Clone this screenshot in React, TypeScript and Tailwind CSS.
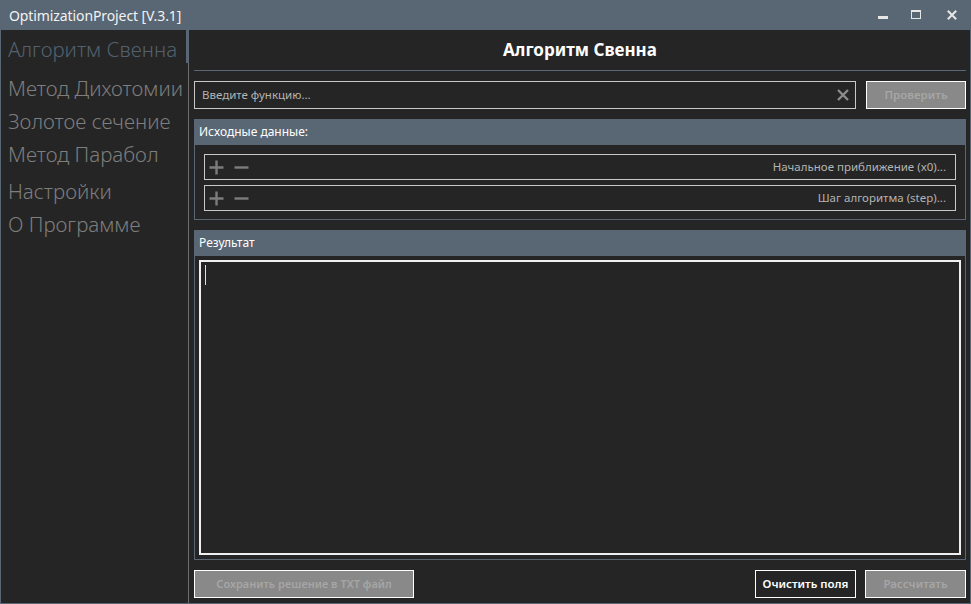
import { useState } from "react";

const font = { fontFamily: '"Noto Sans", "Open Sans", sans-serif' };

const menu = [
  { label: "Алгоритм Свенна", active: true, mt: "mt-[3px]" },
  { label: "Метод Дихотомии", active: false, mt: "mt-[6px]" },
  { label: "Золотое сечение", active: false, mt: "mt-0" },
  { label: "Метод Парабол", active: false, mt: "mt-0" },
  { label: "Настройки", active: false, mt: "mt-[4px]" },
  { label: "О Программе", active: false, mt: "mt-0" },
];

const PlusMinus = () => (
  <div className="flex items-center gap-[10px] pl-[4px]">
    <svg width="15" height="15" viewBox="0 0 15 15">
      <path d="M7.5 0.5v14M0.5 7.5h14" stroke="#7c7c7c" strokeWidth="2.4" />
    </svg>
    <svg width="15" height="15" viewBox="0 0 15 15">
      <path d="M0.5 7.5h14" stroke="#7c7c7c" strokeWidth="2.4" />
    </svg>
  </div>
);

const ParamRow = ({ hint }: { hint: string }) => (
  <div className="flex h-[26px] items-center justify-between border border-[#c8c8c8] pr-[9px]">
    <PlusMinus />
    <span className="text-[11.5px] text-[#b4b4b4]">{hint}</span>
  </div>
);

export default function App() {
  const [func, setFunc] = useState("");

  return (
    <div
      className="flex h-[604px] w-[971px] flex-col bg-[#596673] antialiased"
      style={font}
    >
      {/* title bar */}
      <div className="flex h-[30px] shrink-0 items-center justify-between pl-[9px] pr-[14px]">
        <span className="text-[14px] tracking-[-0.1px] text-[#f2f2f2]">OptimizationProject [V.3.1]</span>
        <div className="flex items-center">
          <svg width="10" height="10" viewBox="0 0 10 10">
            <rect x="0" y="6" width="10" height="3" fill="#e6e6e6" />
          </svg>
          <svg className="ml-[23px]" width="10" height="10" viewBox="0 0 10 10">
            <rect x="0.5" y="0.5" width="9" height="8" fill="none" stroke="#e6e6e6" strokeWidth="1" />
            <rect x="0" y="0" width="10" height="2" fill="#e6e6e6" />
          </svg>
          <svg className="ml-[26px]" width="10" height="10" viewBox="0 0 10 10">
            <path d="M0.8 0.8l8.4 8.4M9.2 0.8l-8.4 8.4" stroke="#e6e6e6" strokeWidth="2" />
          </svg>
        </div>
      </div>

      {/* body */}
      <div className="mx-[1px] mb-[1px] flex flex-1 bg-[#252525]">
        {/* sidebar */}
        <div className="flex w-[185px] flex-col pl-[7px]">
          {menu.map((m) => (
            <div
              key={m.label}
              className={`${m.mt} whitespace-nowrap text-[20.5px] font-light leading-[33px] ${
                m.active ? "text-[#53616e]" : "text-[#7e7e7e]"
              }`}
            >
              {m.label}
            </div>
          ))}
        </div>
        <div className="flex w-[4px] flex-col">
          <div className="h-[33px] w-[3px] bg-[#596673]" />
          <div className="ml-[2px] w-[1px] flex-1 bg-[#6e6e6e]" />
        </div>

        {/* main */}
        <div className="flex flex-1 flex-col pb-[5px] pl-[4px] pr-[4px]">
          <div className="flex h-[40px] shrink-0 items-center justify-center text-[17px] font-bold text-white">
            Алгоритм Свенна
          </div>
          <div className="h-[1px] shrink-0 bg-[#596673]" />

          <div className="mt-[10px] flex h-[28px] shrink-0 gap-[10px]">
            <div className="flex flex-1 items-center border border-[#c8c8c8] pl-[7px] pr-[6px]">
              <input
                value={func}
                onChange={(e) => setFunc(e.target.value)}
                placeholder="Введите функцию..."
                className="flex-1 bg-transparent text-[11.5px] text-[#dcdcdc] outline-none placeholder:text-[#b4b4b4]"
                style={font}
              />
              <svg width="12" height="12" viewBox="0 0 12 12">
                <path d="M1 1l10 10M11 1l-10 10" stroke="#8c8c8c" strokeWidth="2.4" />
              </svg>
            </div>
            <button className="w-[100px] border border-white bg-[#898989] text-[11.5px] font-semibold text-[#a6a6a6]">
              Проверить
            </button>
          </div>

          {/* input data group */}
          <div className="mt-[10px] flex shrink-0 flex-col">
            <div className="flex h-[26px] items-center bg-[#596673] pl-[5px] text-[12px] text-white">
              Исходные данные:
            </div>
            <div className="flex flex-col gap-[5px] border-x border-b border-[#596673] px-[9px] pb-[8px] pt-[9px]">
              <ParamRow hint="Начальное приближение (x0)..." />
              <ParamRow hint="Шаг алгоритма (step)..." />
            </div>
          </div>

          {/* result group */}
          <div className="mt-[10px] flex flex-1 flex-col">
            <div className="flex h-[26px] shrink-0 items-center bg-[#596673] pl-[5px] text-[12px] text-white">
              Результат
            </div>
            <div className="flex flex-1 flex-col border-x border-b border-[#596673] px-[4px] pb-[4px] pt-[4px]">
              <div className="flex-1 border-2 border-[#f0f0f0] pl-[4px] pt-[3px]">
                <div className="h-[20px] w-[1px] bg-[#e0e0e0]" />
              </div>
            </div>
          </div>

          {/* buttons */}
          <div className="mt-[10px] flex h-[28px] shrink-0 items-stretch">
            <button className="w-[220px] border border-white bg-[#898989] text-[11px] font-semibold text-[#a6a6a6]">
              Сохранить решение в TXT файл
            </button>
            <div className="flex-1" />
            <button className="w-[101px] border border-white bg-[#252525] text-[11.5px] font-semibold text-white">
              Очистить поля
            </button>
            <button className="ml-[9px] w-[101px] border border-white bg-[#898989] text-[11.5px] font-semibold text-[#a6a6a6]">
              Рассчитать
            </button>
          </div>
        </div>
      </div>
    </div>
  );
}
